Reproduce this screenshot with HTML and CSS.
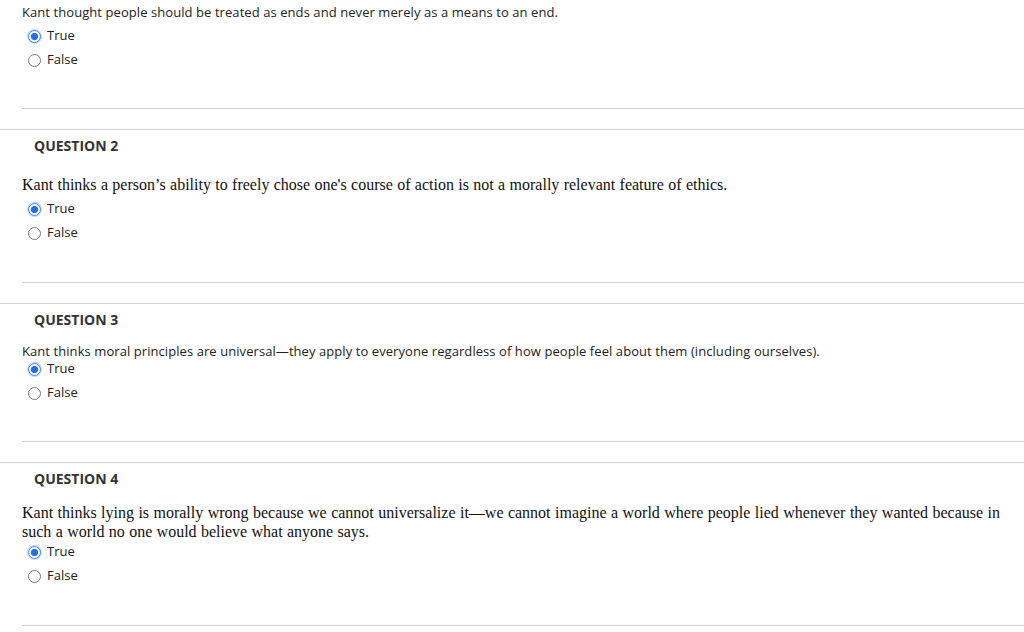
FILE: index.html
```html
<!DOCTYPE html>
<html>
<head>
<meta charset="utf-8">
<link rel="stylesheet" href="styles.css">
</head>
<body>
<div class="question q-first">
  <div class="q-body">
    <p class="q-text sans">Kant thought people should be treated as ends and never merely as a means to an end.</p>
    <ul class="options">
      <li class="option"><span class="radio checked"></span><span>True</span></li>
      <li class="option"><span class="radio"></span><span>False</span></li>
    </ul>
    <div class="inner-sep"></div>
  </div>
</div>

<div class="question q-serif">
  <h3 class="q-header">QUESTION 2</h3>
  <div class="q-body">
    <p class="q-text serif">Kant thinks a person’s ability to freely chose one's course of action is not a morally relevant feature of ethics.</p>
    <ul class="options">
      <li class="option"><span class="radio checked"></span><span>True</span></li>
      <li class="option"><span class="radio"></span><span>False</span></li>
    </ul>
    <div class="inner-sep"></div>
  </div>
</div>

<div class="question">
  <h3 class="q-header">QUESTION 3</h3>
  <div class="q-body">
    <p class="q-text sans tight">Kant thinks moral principles are universal—they apply to everyone regardless of how people feel about them (including ourselves).</p>
    <ul class="options">
      <li class="option"><span class="radio checked"></span><span>True</span></li>
      <li class="option"><span class="radio"></span><span>False</span></li>
    </ul>
    <div class="inner-sep"></div>
  </div>
</div>

<div class="question q-serif">
  <h3 class="q-header">QUESTION 4</h3>
  <div class="q-body">
    <p class="q-text serif multi">Kant thinks lying is morally wrong because we cannot universalize it—we cannot imagine a world where people lied whenever they wanted because in such a world no one would believe what anyone says.</p>
    <ul class="options">
      <li class="option"><span class="radio checked"></span><span>True</span></li>
      <li class="option"><span class="radio"></span><span>False</span></li>
    </ul>
    <div class="inner-sep"></div>
  </div>
</div>
</body>
</html>
```

FILE: styles.css
```css
html, body {
  margin: 0;
  padding: 0;
  background: #ffffff;
}

body {
  font-family: "Open Sans", "Liberation Sans", sans-serif;
  font-size: 13px;
  color: #222222;
  width: 1024px;
  overflow: hidden;
}

.question {
  border-top: 1px solid #d2d2d2;
  margin-top: 20px;
}

.question.q-first {
  border-top: none;
  margin-top: 0;
}

.q-header {
  margin: 0;
  padding-left: 34px;
  height: 30px;
  line-height: 31px;
  font-size: 14px;
  font-weight: 700;
  color: #333333;
}

.q-body {
  padding-left: 22px;
}

.q-text {
  margin: 0;
}

.q-first .q-text {
  line-height: 24px;
}

.q-text.sans {
  font-family: "Open Sans", "Liberation Sans", sans-serif;
  font-size: 13px;
  letter-spacing: 0.07px;
  color: #222222;
}

.q-text.serif {
  font-family: "Liberation Serif", "Times New Roman", serif;
  font-size: 16px;
  word-spacing: 0.35px;
  color: #111111;
  margin-top: 14px;
  line-height: 22px;
}

.q-text.sans.tight {
  margin-top: 9px;
  margin-bottom: -3px;
  line-height: 16px;
}

.q-text.serif.multi {
  margin-top: 10px;
  margin-bottom: -2px;
  line-height: 19px;
  padding-right: 24px;
  text-align: justify;
}

.options {
  list-style: none;
  margin: 0;
  padding: 0;
}

.q-first .options {
  margin-top: -1px;
}

.option {
  display: flex;
  align-items: center;
  gap: 6px;
  height: 24px;
  padding-left: 6px;
  font-size: 13px;
  color: #222222;
}

.radio {
  box-sizing: border-box;
  width: 13px;
  height: 13px;
  border-radius: 50%;
  border: 1px solid #7a7a7a;
  background: #ffffff;
  margin-top: 3px;
  flex: none;
}

.radio.checked {
  border: 1.5px solid #3d82f5;
  background: radial-gradient(circle, #1f6ff0 0, #1f6ff0 3.3px, #ffffff 3.9px);
  box-shadow: 0 0 0 1px rgba(120, 170, 250, 0.45);
}

.inner-sep {
  border-top: 1px solid #d2d2d2;
  margin-top: 37px;
}

.q-serif .inner-sep {
  margin-top: 38px;
}
```
